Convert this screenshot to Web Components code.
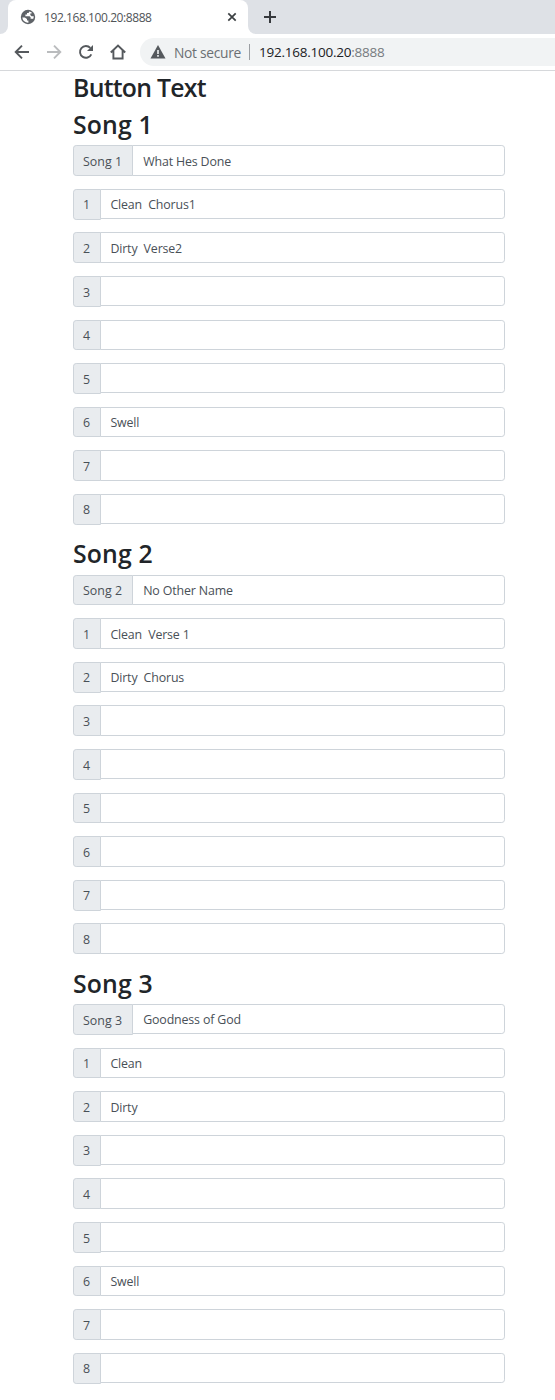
<!DOCTYPE html>
<html lang="en">
<head>
<meta charset="utf-8">
<title>192.168.100.20:8888</title>
<style>
html,body{margin:0;padding:0;background:#fff}
body{font-family:"Open Sans","Noto Sans",sans-serif;height:1400px;overflow:hidden}
</style>
</head>
<body>
<browser-frame></browser-frame>
<main-page></main-page>
<script>
const define = (name, render) => customElements.define(name, class extends HTMLElement {
  connectedCallback() {
    if (!this.shadowRoot) this.attachShadow({mode: 'open'}).innerHTML = render(this);
  }
});

define('browser-frame', () => `
<style>
:host{display:block;height:71px;box-sizing:border-box;border-bottom:1px solid #d6d8db;background:#fff}
svg{display:block;flex:none}
.tabs{height:34px;background:#dee1e6;display:flex}
.edge{width:8px;background:#dee1e6;border-bottom-right-radius:8px}
.under{background:#fff}
.tab{width:240px;box-sizing:border-box;background:#fff;border-radius:8px 8px 0 0;display:flex;align-items:center;padding:0 10px 0 12px}
.title{flex:1;margin-left:8px;font-size:12px;letter-spacing:-.42px;color:#505458;white-space:nowrap}
.rest{flex:1;background:#dee1e6;border-bottom-left-radius:8px;display:flex;align-items:center;padding-left:15px}
.bar{height:36px;display:flex;align-items:center;padding-left:14px}
.bar>svg{margin-right:16px}
.omni{flex:1;height:28px;background:#f1f3f4;border-radius:14px 0 0 14px;display:flex;align-items:center;padding-left:10px;font-size:13.8px;white-space:nowrap;color:#6b6f73}
.ns{margin-left:8px;width:67px;letter-spacing:-.3px}
.sep{width:1px;height:16px;background:#9b9ea2;margin:0 9px 0 8px}
.url{font-size:13.5px;letter-spacing:-.24px;color:#202124}
.url span{color:#777b7f}
</style>
<div class="tabs">
 <div class="under"><div class="edge" style="height:34px"></div></div>
 <div class="tab">
  <svg width="16" height="16" viewBox="0 0 16 16"><circle cx="8" cy="8" r="7.2" fill="#5f6368"/><path d="M9.300 2.400 8.600 3.900H7v1.600H5.400v1.700h4.200l1 1v1.500h1.600l.9.400A5.700 5.700 0 0 0 13.700 7.300H11.500L10.300 6V4.600h1.200l.3-1A5.800 5.800 0 0 0 9.300 2.400zM2.300 8.500h2.500l2.200 1.400v1.500h1.400v2.300A5.700 5.700 0 0 1 2.300 8.500z" fill="#fff"/></svg>
  <span class="title">192.168.100.20:8888</span>
  <svg width="12" height="12" viewBox="0 0 12 12"><path d="M2.300 2.300 9.700 9.700M9.700 2.300 2.300 9.700" stroke="#3c4043" stroke-width="1.700"/></svg>
 </div>
 <div class="under" style="flex:1;display:flex"><div class="rest">
  <svg width="14" height="14" viewBox="0 0 14 14"><path d="M7 1v12M1 7h12" stroke="#36393d" stroke-width="2"/></svg>
 </div></div>
</div>
<div class="bar">
 <svg width="16" height="16" viewBox="0 0 16 16" fill="none" stroke="#55595d" stroke-width="1.900"><path d="M15 8H2.500M8 1.700 1.700 8 8 14.300"/></svg>
 <svg width="16" height="16" viewBox="0 0 16 16" fill="none" stroke="#babcbe" stroke-width="1.900"><path d="M1 8h12.500M8 1.700 14.300 8 8 14.300"/></svg>
 <svg width="16" height="16" viewBox="0 0 16 16"><path d="M13.300 10.300A5.900 5.900 0 1 1 12.300 3.900" fill="none" stroke="#55595d" stroke-width="1.900"/><path d="M15 1v6H9z" fill="#55595d"/></svg>
 <svg width="16" height="16" viewBox="0 0 16 16" style="margin-right:14px"><path d="M.8 8.500 8 1.500l7.200 7M3.400 6.500v8h9.200v-8" fill="none" stroke="#55595d" stroke-width="1.900"/></svg>
 <div class="omni">
  <svg width="16" height="16" viewBox="0 0 16 16"><path d="M8 1 15.500 14.500H.5z" fill="#55595d"/><path d="M8 6v4M8 11v1.700" stroke="#f1f3f4" stroke-width="1.600"/></svg>
  <span class="ns">Not secure</span><i class="sep"></i><span class="url">192.168.100.20<span>:8888</span></span>
 </div>
</div>`);

define('page-heading', () => `
<style>:host{display:block;height:30.72px;line-height:32px;margin-bottom:6.4px;font-size:24.8px;font-weight:600;letter-spacing:var(--tracking,.15px);color:#212529;white-space:nowrap}</style><slot></slot>`);

define('input-row', el => `
<style>
:host{display:flex;height:30.8px;margin-bottom:12.8px;font-size:12.4px;letter-spacing:-.15px;color:#495057;white-space:pre;align-items:flex-start}
.label{box-sizing:border-box;height:30.8px;width:${el.hasAttribute('wide') ? 60 : 28}px;background:#e9ecef;border:1px solid #ced4da;border-radius:3.2px 0 0 3.2px;display:flex;align-items:center;padding:1.4px 0 0 9px;letter-spacing:.05px}
.input{box-sizing:border-box;flex:1;height:30.4px;margin-left:-1px;border:1px solid #ced4da;border-radius:0 3.2px 3.2px 0;background:#fff;display:flex;align-items:center;padding:1.4px 9.6px 0 ${el.hasAttribute('wide') ? 10.2 : 9.4}px}
</style>
<div class="label">${el.getAttribute('label')}</div><div class="input"><slot></slot></div>`);

define('song-group', el => {
  const n = el.getAttribute('number');
  const values = el.getAttribute('values').split('|');
  return `<style>:host{display:block}</style>
<page-heading>Song ${n}</page-heading>
<input-row wide label="Song ${n}">${el.getAttribute('name')}</input-row>
${values.map((v, i) => `<input-row label="${i + 1}">${v}</input-row>`).join('')}`;
});

define('main-page', () => `
<style>:host{display:block;width:432px;margin:-.1px 0 0 73px}.top{--tracking:-.72px}</style>
<page-heading class="top">Button Text</page-heading>
<song-group number="1" name="What Hes Done" values="Clean  Chorus1|Dirty  Verse2||||Swell||"></song-group>
<song-group number="2" name="No Other Name" values="Clean  Verse 1|Dirty  Chorus||||||"></song-group>
<song-group number="3" name="Goodness of God" values="Clean|Dirty||||Swell||"></song-group>`);
</script>
</body>
</html>
